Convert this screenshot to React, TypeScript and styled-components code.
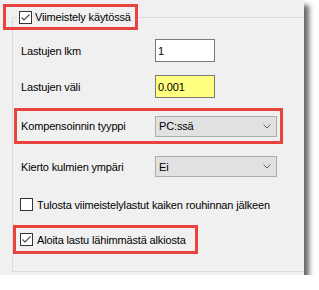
import React from 'react'
import styled, { createGlobalStyle } from 'styled-components'

const GlobalStyle = createGlobalStyle`
  html, body {
    margin: 0;
    padding: 0;
    background: #ffffff;
  }
  body {
    font-family: 'Liberation Sans', Arial, sans-serif;
    font-size: 11px;
    letter-spacing: -0.15px;
    color: #000;
  }
`

const Panel = styled.div`
  width: 304px;
  height: 275px;
  box-sizing: border-box;
  padding: 17px 0 0 12px;
  background: #f0f0f0;
  box-shadow: 5px 5px 5px rgba(0, 0, 0, 0.6);
  overflow: hidden;
`

const Group = styled.div`
  width: 310px;
  height: 255px;
  box-sizing: border-box;
  border: 1px solid #dcdcdc;
  border-right: none;
  display: flex;
  flex-direction: column;
  align-items: flex-start;
`

const Highlight = styled.div<{ $w: number; $h: number; $mt: number; $ml: number }>`
  box-sizing: border-box;
  width: ${p => p.$w}px;
  height: ${p => p.$h}px;
  margin-top: ${p => p.$mt}px;
  margin-left: ${p => p.$ml}px;
  border: 3px solid #e8433e;
  display: flex;
  align-items: center;
`

const TitleLabel = styled.div`
  display: flex;
  align-items: center;
  gap: 3px;
  height: 20px;
  margin-left: 11px;
  padding: 0 3px 0 2px;
  background: #f0f0f0;
  white-space: nowrap;
`

const FieldRow = styled.div<{ $mt: number; $indent?: number; $h: number }>`
  display: flex;
  align-items: center;
  height: ${p => p.$h}px;
  margin-top: ${p => p.$mt}px;
  padding-left: ${p => p.$indent ?? 8}px;
`

const Label = styled.span`
  width: 134px;
  white-space: nowrap;
`

const TextBox = styled.div<{ $yellow?: boolean }>`
  box-sizing: border-box;
  width: 60px;
  height: 23px;
  border: 1px solid #7a7a7a;
  background: ${p => (p.$yellow ? '#ffff80' : '#ffffff')};
  padding: 0 2px;
  display: flex;
  align-items: center;
`

const Select = styled.div`
  box-sizing: border-box;
  width: 122px;
  height: 21px;
  border: 1px solid #adadad;
  background: #e1e1e1;
  padding: 0 5px 0 3px;
  display: flex;
  align-items: center;
  justify-content: space-between;
`

const CheckRow = styled.div<{ $mt?: number; $indent?: number }>`
  display: flex;
  align-items: center;
  gap: 4px;
  height: 13px;
  margin-top: ${p => p.$mt ?? 0}px;
  padding-left: ${p => p.$indent ?? 0}px;
  white-space: nowrap;
`

const Chevron = () => (
  <svg width="8" height="5" viewBox="0 0 8 5">
    <polyline points="0.5,0.5 4,4 7.5,0.5" fill="none" stroke="#606060" strokeWidth="1" />
  </svg>
)

const CheckBox = ({ checked }: { checked?: boolean }) => (
  <svg width="13" height="13" viewBox="0 0 13 13" style={{ flexShrink: 0 }}>
    <rect x="0.5" y="0.5" width="12" height="12" fill="#ffffff" stroke="#333333" />
    {checked && (
      <polyline points="2.5,6.5 5,9 10.5,3.5" fill="none" stroke="#4a4a4a" strokeWidth="1.1" />
    )}
  </svg>
)

export default function App() {
  return (
    <>
      <GlobalStyle />
      <Panel>
        <Group>
          <Highlight $w={135} $h={26} $mt={-14} $ml={-10}>
            <TitleLabel>
              <CheckBox checked />
              <span>Viimeistely käytössä</span>
            </TitleLabel>
          </Highlight>

          <FieldRow $mt={9} $h={23}>
            <Label>Lastujen lkm</Label>
            <TextBox>1</TextBox>
          </FieldRow>

          <FieldRow $mt={13} $h={23}>
            <Label>Lastujen väli</Label>
            <TextBox $yellow>0.001</TextBox>
          </FieldRow>

          <Highlight $w={269} $h={36} $mt={10} $ml={1}>
            <FieldRow $mt={0} $indent={4} $h={21}>
              <Label>Kompensoinnin tyyppi</Label>
              <Select>
                <span>PC:ssä</span>
                <Chevron />
              </Select>
            </FieldRow>
          </Highlight>

          <FieldRow $mt={12} $h={21}>
            <Label>Kierto kulmien ympäri</Label>
            <Select>
              <span>Ei</span>
              <Chevron />
            </Select>
          </FieldRow>

          <CheckRow $mt={21} $indent={7}>
            <CheckBox />
            <span>Tulosta viimeistelylastut kaiken rouhinnan jälkeen</span>
          </CheckRow>

          <Highlight $w={185} $h={29} $mt={14} $ml={0}>
            <CheckRow $indent={4}>
              <CheckBox checked />
              <span>Aloita lastu lähimmästä alkiosta</span>
            </CheckRow>
          </Highlight>
        </Group>
      </Panel>
    </>
  )
}
